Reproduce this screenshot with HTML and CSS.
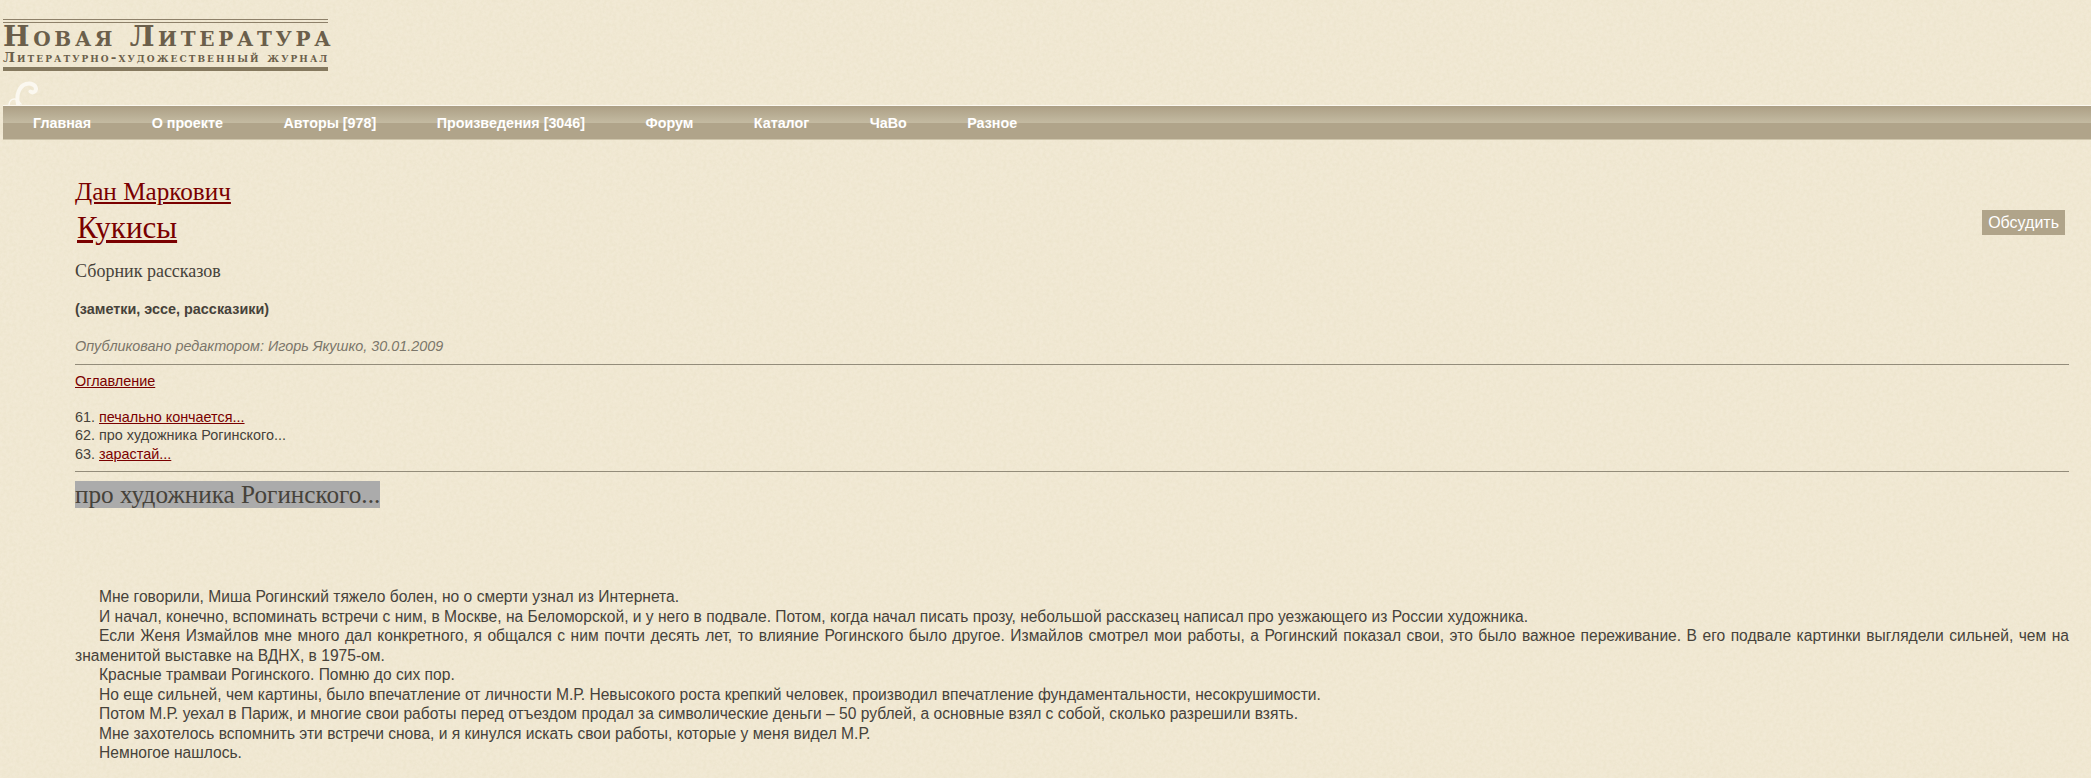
FILE: index.html
```html
<!DOCTYPE html>
<html lang="ru">
<head>
  <meta charset="UTF-8">
  <title>Новая Литература</title>
  <link rel="stylesheet" href="styles.css">
</head>
<body>
  <header class="top">
    <div class="logo">
      <div class="logo-name">Новая Литература</div>
      <div class="logo-sub">Литературно-художественный журнал</div>
    </div>
    <svg class="curl" width="30" height="24" viewBox="0 0 30 24">
      <path d="M10 23C8 14 11 5 18 3c5-1.500 9.500 1 10 4.500.3 3-3 5-5.500 3" fill="none" stroke="#fbf8f0" stroke-width="4" stroke-linecap="round"/>
      <path d="M1 24c0-4 3-6.500 6-6 3 .5 4 3 6.500 5.500" fill="none" stroke="#fbf8f0" stroke-width="1.500"/>
    </svg>
  </header>

  <nav class="menu">
    <a href="#">Главная</a>
    <a href="#">О проекте</a>
    <a href="#">Авторы [978]</a>
    <a href="#">Произведения [3046]</a>
    <a href="#">Форум</a>
    <a href="#">Каталог</a>
    <a href="#">ЧаВо</a>
    <a href="#">Разное</a>
  </nav>

  <main class="content">
    <div class="head-row">
      <div>
        <div class="author"><a href="#">Дан Маркович</a></div>
        <div class="title"><a href="#">Кукисы</a></div>
      </div>
      <a class="discuss" href="#">Обсудить</a>
    </div>
    <div class="subtitle">Сборник рассказов</div>
    <div class="genre">(заметки, эссе, рассказики)</div>
    <div class="published">Опубликовано редактором: Игорь Якушко, 30.01.2009</div>
    <hr>
    <div class="toc-link"><a href="#">Оглавление</a></div>
    <ul class="toc">
      <li>61. <a href="#">печально кончается...</a></li>
      <li>62. про художника Рогинского...</li>
      <li>63. <a href="#">зарастай...</a></li>
    </ul>
    <hr class="toc-end">
    <h2 class="chapter"><span>про художника Рогинского...</span></h2>
    <div class="story">
      <p>Мне говорили, Миша Рогинский тяжело болен, но о смерти узнал из Интернета.</p>
      <p>И начал, конечно, вспоминать встречи с ним, в Москве, на Беломорской, и у него в подвале. Потом, когда начал писать прозу, небольшой рассказец написал про уезжающего из России художника.</p>
      <p>Если Женя Измайлов мне много дал конкретного, я общался с ним почти десять лет, то влияние Рогинского было другое. Измайлов смотрел мои работы, а Рогинский показал свои, это было важное переживание. В его подвале картинки выглядели сильней, чем на знаменитой выставке на ВДНХ, в 1975-ом.</p>
      <p>Красные трамваи Рогинского. Помню до сих пор.</p>
      <p>Но еще сильней, чем картины, было впечатление от личности М.Р. Невысокого роста крепкий человек, производил впечатление фундаментальности, несокрушимости.</p>
      <p>Потом М.Р. уехал в Париж, и многие свои работы перед отъездом продал за символические деньги – 50 рублей, а основные взял с собой, сколько разрешили взять.</p>
      <p>Мне захотелось вспомнить эти встречи снова, и я кинулся искать свои работы, которые у меня видел М.Р.</p>
      <p>Немногое нашлось.</p>
    </div>
  </main>
</body>
</html>
```

FILE: styles.css
```css
html, body {
  height: 100%;
}

body {
  margin: 0;
  padding: 0 0 0 3px;
  overflow: hidden;
  font-family: "Liberation Sans", Arial, sans-serif;
  font-size: 14.4px;
  color: #46423a;
  background-color: #f2ead6;
  background-image: url("data:image/svg+xml,%3Csvg xmlns='http://www.w3.org/2000/svg' width='300' height='300'%3E%3Cfilter id='n'%3E%3CfeTurbulence type='fractalNoise' baseFrequency='0.3' numOctaves='3' stitchTiles='stitch'/%3E%3CfeColorMatrix values='0 0 0 0 0.62 0 0 0 0 0.55 0 0 0 0 0.3 0 0 0 0.2 -0.04'/%3E%3C/filter%3E%3Crect width='300' height='300' filter='url(%23n)'/%3E%3C/svg%3E");
}

a {
  color: #7a0000;
}

/* шапка */
.top {
  height: 105px;
  padding-top: 19px;
  box-sizing: border-box;
  position: relative;
}

.logo {
  width: 325px;
  height: 52px;
  box-sizing: border-box;
  border-top: 4px double #8d8069;
  border-bottom: 4px solid #85795f;
  color: #6b5f4b;
  font-family: "DejaVu Serif", serif;
  font-weight: bold;
  white-space: nowrap;
}

.logo-name {
  font-size: 28px;
  line-height: 28px;
  font-variant: small-caps;
  letter-spacing: 3.7px;
}

.logo-sub {
  font-size: 13.5px;
  line-height: 13px;
  font-variant: small-caps;
  letter-spacing: 2.05px;
}

.curl {
  position: absolute;
  left: 5px;
  bottom: 0;
}

/* меню */
.menu {
  display: flex;
  height: 35px;
  box-sizing: border-box;
  border-top: 1px solid #fbf8ef;
  border-bottom: 1px solid #cfc6ac;
  padding-left: 30px;
  gap: 60.5px;
  background: linear-gradient(#ac9f85 0, #c3baa1 50%, #b0a48a 52%, #b0a48a 100%);
}

.menu a {
  color: #fff;
  font-size: 14.3px;
  font-weight: bold;
  line-height: 35px;
  text-decoration: none;
}

/* контент */
.content {
  padding: 0 22px 0 72px;
}

.head-row {
  display: flex;
  justify-content: space-between;
  align-items: flex-end;
  padding-top: 38px;
  padding-right: 4px;
}

.author {
  font-family: "Liberation Serif", serif;
  font-size: 25.2px;
  line-height: 28px;
}

.title {
  font-family: "Liberation Serif", serif;
  font-size: 31px;
  line-height: 40px;
  padding-left: 2px;
  margin-top: 1.5px;
}

.discuss {
  background: #b0a48a;
  color: #fff;
  font-size: 16px;
  line-height: 25px;
  padding: 0 6px;
  margin-bottom: 13px;
  text-decoration: none;
}

.subtitle {
  font-family: "Liberation Serif", serif;
  font-size: 18px;
  line-height: 20px;
  margin-top: 13px;
}

.genre {
  font-weight: bold;
  line-height: 18px;
  margin-top: 19px;
}

.published {
  color: #7b766a;
  font-style: italic;
  line-height: 18px;
  margin-top: 19px;
}

hr {
  border: 0;
  height: 1px;
  background: #938c7a;
  margin: 9px 0 0;
}

hr.toc-end {
  margin-top: 8px;
}

.toc-link {
  line-height: 18px;
  margin-top: 7px;
}

.toc {
  list-style: none;
  margin: 18px 0 0;
  padding: 0;
  line-height: 18.5px;
}

.chapter {
  margin: 8px 0 0;
  font-family: "Liberation Serif", serif;
  font-size: 25.2px;
  font-weight: normal;
  line-height: 29px;
}

.chapter span {
  background: #ababab;
}

.story {
  margin-top: 78px;
  font-size: 15.6px;
  line-height: 19.5px;
  text-align: justify;
}

.story p {
  margin: 0;
  text-indent: 24px;
}
```
